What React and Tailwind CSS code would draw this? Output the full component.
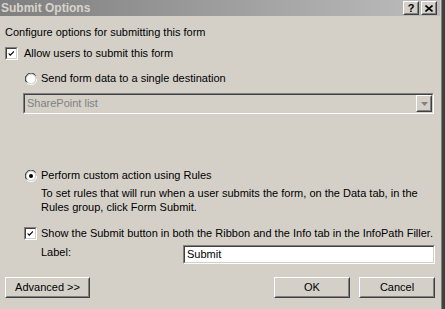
import React from "react";

const font = { fontFamily: '"Liberation Sans", Arial, sans-serif' };

function Raised({ className = "", children }) {
  return (
    <div className={"border border-t-white border-l-white border-r-[#404040] border-b-[#404040] bg-[#d4d0c8] " + className}>
      <div className="w-full h-full border border-t-[#d4d0c8] border-l-[#d4d0c8] border-r-[#808080] border-b-[#808080] flex items-center justify-center">
        {children}
      </div>
    </div>
  );
}

function Sunken({ className = "", inner = "bg-white", children }) {
  return (
    <div className={"border border-t-[#808080] border-l-[#808080] border-r-white border-b-white " + className}>
      <div className={"w-full h-full border border-t-[#404040] border-l-[#404040] border-r-[#d4d0c8] border-b-[#d4d0c8] flex items-center " + inner}>
        {children}
      </div>
    </div>
  );
}

function Checkbox() {
  return (
    <Sunken className="w-[13px] h-[13px] shrink-0">
      <svg width="11" height="11" viewBox="0 0 11 11">
        <path d="M2 4.5 L4 6.5 L8.5 2 L8.5 4 L4 8.5 L2 6.5 Z" fill="#000" />
      </svg>
    </Sunken>
  );
}

function Radio({ checked }) {
  return (
    <svg width="12" height="12" viewBox="0 0 12 12" className="shrink-0">
      <path d="M11 3 A5.5 5.5 0 0 0 1 3 A5.5 5.5 0 0 0 2 10" stroke="#808080" strokeWidth="1" fill="none" />
      <path d="M10 2.2 A4.6 4.6 0 0 0 2 2.2 A4.6 4.6 0 0 0 2.2 9.6" stroke="#404040" strokeWidth="1" fill="none" />
      <circle cx="6" cy="6" r="4.2" fill="#fff" />
      <path d="M1.5 9.5 A5.5 5.5 0 0 0 11.5 6" stroke="#fff" strokeWidth="1" fill="none" />
      {checked && <circle cx="6" cy="6" r="2" fill="#000" />}
    </svg>
  );
}

function Button({ label, className = "" }) {
  return (
    <Raised className={"h-[21px] " + className}>
      <span className="text-[11px] leading-none text-black">{label}</span>
    </Raised>
  );
}

export default function App() {
  return (
    <div className="w-[445px] h-[309px] overflow-hidden bg-[#d4d0c8] flex text-[11px] text-black" style={font}>
      <div className="flex-1 flex flex-col">
        <div className="h-[16px] flex items-center bg-gradient-to-r from-[#7f7f7f] to-[#bdbdbd]">
          <span className="flex-1 pl-[1px] font-bold text-[12px] text-[#d8d4cc] leading-none">Submit Options</span>
          <div className="flex gap-[2px] mr-[3px]">
            <Raised className="w-[16px] h-[14px]">
              <span className="font-bold text-[11px] leading-none">?</span>
            </Raised>
            <Raised className="w-[16px] h-[14px]">
              <svg width="8" height="7" viewBox="0 0 8 7">
                <path d="M0.5 0.5 L7.5 6.5 M7.5 0.5 L0.5 6.5" stroke="#000" strokeWidth="1.6" />
              </svg>
            </Raised>
          </div>
        </div>

        <div className="mt-[10px] pl-[5px] leading-[13px]">Configure options for submitting this form</div>

        <div className="mt-[8px] pl-[5px] flex items-center gap-[6px] leading-[13px]">
          <Checkbox />
          <span>Allow users to submit this form</span>
        </div>

        <div className="mt-[12px] pl-[25px] flex items-center gap-[4px] leading-[13px]">
          <Radio />
          <span>Send form data to a single destination</span>
        </div>

        <Sunken className="mt-[8px] ml-[23px] w-[411px] h-[21px]" inner="bg-[#d4d0c8]">
          <span className="flex-1 pl-[2px] text-[#808080]">SharePoint list</span>
          <Raised className="w-[16px] h-[17px]">
            <svg width="7" height="4" viewBox="0 0 7 4">
              <path d="M0 0 H7 L3.5 4 Z" fill="#808080" />
            </svg>
          </Raised>
        </Sunken>

        <div className="mt-[55px] pl-[25px] flex items-center gap-[4px] leading-[13px]">
          <Radio checked />
          <span>Perform custom action using Rules</span>
        </div>

        <div className="mt-[4px] pl-[41px] pr-[6px] leading-[14px]">
          To set rules that will run when a user submits the form, on the Data tab, in the Rules group, click Form Submit.
        </div>

        <div className="mt-[13px] pl-[24px] flex items-center gap-[4px] leading-[13px]">
          <Checkbox />
          <span>Show the Submit button in both the Ribbon and the Info tab in the InfoPath Filler.</span>
        </div>

        <div className="mt-[5px] pl-[41px] flex items-center">
          <span className="w-[142px] -mt-[4px]">Label:</span>
          <Sunken className="w-[252px] h-[19px]">
            <span className="pl-[2px]">Submit</span>
          </Sunken>
        </div>

        <div className="mt-[13px] pl-[5px] flex">
          <Button label="Advanced >>" className="w-[85px]" />
          <div className="flex-1" />
          <Button label="OK" className="w-[76px]" />
          <Button label="Cancel" className="w-[76px] ml-[9px] mr-[5px]" />
        </div>
      </div>
      <div className="w-[5px] flex">
        <div className="w-[1px] bg-[#d4d0c8]" />
        <div className="w-[1px] bg-[#808080]" />
        <div className="flex-1 bg-[#404040]" />
      </div>
    </div>
  );
}
